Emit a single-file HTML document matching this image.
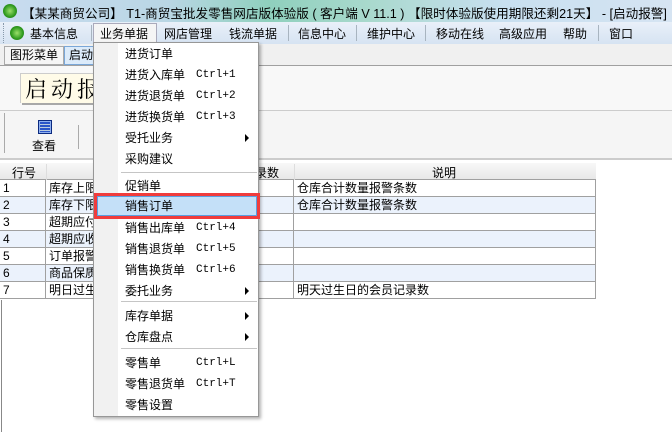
<!DOCTYPE html><html><head><meta charset="utf-8"><style>
*{margin:0;padding:0;box-sizing:border-box}
body{width:672px;height:432px;overflow:hidden;background:#fff;font-family:"Liberation Sans","Noto Sans CJK SC","WenQuanYi Zen Hei",sans-serif;font-size:12px;color:#000;position:relative}
.a{position:absolute;white-space:nowrap}
#title{left:0;top:0;width:672px;height:22px;background:linear-gradient(90deg,#c9dcf0 0%,#b9d6e4 25%,#8fd0bd 40%,#a9d9cd 55%,#c8dff0 75%,#d6e4f2 100%)}
#menubar{left:0;top:22px;width:672px;height:22px;background:linear-gradient(#e9f0f9,#d6e3f2)}
.m{top:25px;font-size:12px}
.sep{top:25px;width:1px;height:16px;background:#a8b4c0}
.ico{width:14px;height:14px;border-radius:50%;background:radial-gradient(circle,#9be06a 0,#2f9a1e 60%,#1d6b10 100%)}
.row{position:absolute;left:0;width:596px;height:17px;border-bottom:1px solid #a0a0a0}
.c{position:absolute;top:0;height:17px;border-right:1px solid #a0a0a0;padding-left:3px;line-height:16px}
#menu{left:93px;top:42px;width:166px;height:375px;background:#fff;border:1px solid #979797;box-shadow:2px 2px 3px rgba(0,0,0,.3)}
#gut{left:0;top:0;width:24px;height:373px;background:#f1f1f1}
.mi{left:31px;font-size:12px;height:18px;line-height:18px}
.sc{left:102px;font-family:"Liberation Mono",monospace;font-size:11px;height:18px;line-height:18px}
.ar{left:151px;width:0;height:0;border-left:4px solid #000;border-top:4px solid transparent;border-bottom:4px solid transparent}
.ms{left:27px;width:136px;height:1px;background:#c5c5c5}
</style></head><body>
<div class="a" id="title"></div>
<div class="a ico" style="left:3px;top:4px"></div>
<div class="a" style="left:22px;top:3px;font-size:12.6px;color:#000">【某某商贸公司】 T1-商贸宝批发零售网店版体验版 ( 客户端 V 11.1 ) 【限时体验版使用期限还剩21天】 - [启动报警]</div>
<div class="a" id="menubar"></div>
<div class="a" style="left:3px;top:23px;width:3px;height:20px;border-left:1px dotted #8899aa"></div>
<div class="a ico" style="left:10px;top:26px"></div>
<div class="a m" style="left:30px">基本信息</div>
<div class="a sep" style="left:91px"></div>
<div class="a" style="left:93px;top:23px;width:64px;height:20px;background:#f5f5f5;border:1px solid #aab;border-bottom:none"></div>
<div class="a m" style="left:100px">业务单据</div>
<div class="a m" style="left:164px">网店管理</div>
<div class="a m" style="left:229px">钱流单据</div>
<div class="a sep" style="left:288px"></div>
<div class="a m" style="left:298px">信息中心</div>
<div class="a sep" style="left:356px"></div>
<div class="a m" style="left:367px">维护中心</div>
<div class="a sep" style="left:425px"></div>
<div class="a m" style="left:436px">移动在线</div>
<div class="a m" style="left:499px">高级应用</div>
<div class="a m" style="left:563px">帮助</div>
<div class="a sep" style="left:598px"></div>
<div class="a m" style="left:609px">窗口</div>
<div class="a" style="left:0;top:44px;width:672px;height:22px;background:#f0f0f0;border-bottom:1px solid #a0a0a0"></div>
<div class="a" style="left:4px;top:46px;width:60px;height:19px;border:1px solid #aaa;background:#f5f5f5;padding-left:5px;line-height:17px">图形菜单</div>
<div class="a" style="left:64px;top:46px;width:40px;height:19px;border:1px solid #7aa7d8;background:#dcebfa;padding-left:4px;line-height:17px">启动</div>
<div class="a" style="left:0;top:66px;width:672px;height:44px;background:#f8f8f8"></div>
<div class="a" style="left:20px;top:73px;width:80px;height:30px;background:#fffbe8;border-top:1px solid #ccc;border-left:1px solid #ccc;box-shadow:2px 2px 0 #a8a8a8;font-family:'Noto Serif CJK SC',serif;font-size:22px;line-height:30px;padding-left:4px;letter-spacing:4px">启动报</div>
<div class="a" style="left:0;top:110px;width:672px;height:50px;background:#f5f5f5;border-top:1px solid #ccc;border-bottom:2px solid #ccc"></div>
<div class="a" style="left:4px;top:113px;width:3px;height:40px;border-left:1px solid #aaa"></div>
<div class="a" style="left:38px;top:120px;width:14px;height:14px;background:#2a55c8;border:1px solid #0b2a80;box-shadow:inset 0 0 0 1px #8fb0f0"></div>
<div class="a" style="left:40px;top:124px;width:10px;height:1px;background:#bcd"></div>
<div class="a" style="left:40px;top:127px;width:10px;height:1px;background:#bcd"></div>
<div class="a" style="left:40px;top:130px;width:10px;height:1px;background:#bcd"></div>
<div class="a" style="left:32px;top:137px;font-size:12px">查看</div>
<div class="a" style="left:78px;top:125px;width:1px;height:24px;background:#aaa"></div>
<div class="a" style="left:0;top:163px;width:596px;height:17px;background:linear-gradient(#f8f8f8,#e8e8e8);border-bottom:1px solid #a0a0a0"></div>
<div class="a" style="left:12px;top:164px">行号</div>
<div class="a" style="left:46px;top:164px;width:1px;height:16px;background:#ddd"></div>
<div class="a" style="left:255px;top:164px">录数</div>
<div class="a" style="left:294px;top:164px;width:1px;height:16px;background:#ddd"></div>
<div class="a" style="left:432px;top:164px">说明</div>
<div class="row" style="top:180px;background:#fff"><div class="c" style="left:0;width:46px">1</div><div class="c" style="left:46px;width:248px">库存上限</div><div class="c" style="left:294px;width:302px">仓库合计数量报警条数</div></div>
<div class="row" style="top:197px;background:#ebf2fc"><div class="c" style="left:0;width:46px">2</div><div class="c" style="left:46px;width:248px">库存下限</div><div class="c" style="left:294px;width:302px">仓库合计数量报警条数</div></div>
<div class="row" style="top:214px;background:#fff"><div class="c" style="left:0;width:46px">3</div><div class="c" style="left:46px;width:248px">超期应付</div><div class="c" style="left:294px;width:302px"></div></div>
<div class="row" style="top:231px;background:#ebf2fc"><div class="c" style="left:0;width:46px">4</div><div class="c" style="left:46px;width:248px">超期应收</div><div class="c" style="left:294px;width:302px"></div></div>
<div class="row" style="top:248px;background:#fff"><div class="c" style="left:0;width:46px">5</div><div class="c" style="left:46px;width:248px">订单报警</div><div class="c" style="left:294px;width:302px"></div></div>
<div class="row" style="top:265px;background:#ebf2fc"><div class="c" style="left:0;width:46px">6</div><div class="c" style="left:46px;width:248px">商品保质</div><div class="c" style="left:294px;width:302px"></div></div>
<div class="row" style="top:282px;background:#fff"><div class="c" style="left:0;width:46px">7</div><div class="c" style="left:46px;width:248px">明日过生</div><div class="c" style="left:294px;width:302px">明天过生日的会员记录数</div></div>
<div class="a" style="left:1px;top:300px;width:1px;height:132px;background:#888"></div>
<div class="a" id="menu">
<div class="a" id="gut"></div>
<div class="a mi" style="top:2px">进货订单</div>
<div class="a mi" style="top:23px">进货入库单</div><div class="a sc" style="top:23px">Ctrl+1</div>
<div class="a mi" style="top:44px">进货退货单</div><div class="a sc" style="top:44px">Ctrl+2</div>
<div class="a mi" style="top:65px">进货换货单</div><div class="a sc" style="top:65px">Ctrl+3</div>
<div class="a mi" style="top:86px">受托业务</div><div class="a ar" style="top:91px"></div>
<div class="a mi" style="top:107px">采购建议</div>
<div class="a ms" style="top:129px"></div>
<div class="a mi" style="top:134px">促销单</div>
<div class="a" style="left:0;top:150px;width:166px;height:26px;border:3px solid #f03c3c"></div>
<div class="a" style="left:3px;top:153px;width:160px;height:20px;background:#c4e0f8;border:1px solid #5a9ee0"></div>
<div class="a mi" style="top:154px">销售订单</div>
<div class="a mi" style="top:176px">销售出库单</div><div class="a sc" style="top:176px">Ctrl+4</div>
<div class="a mi" style="top:197px">销售退货单</div><div class="a sc" style="top:197px">Ctrl+5</div>
<div class="a mi" style="top:218px">销售换货单</div><div class="a sc" style="top:218px">Ctrl+6</div>
<div class="a mi" style="top:239px">委托业务</div><div class="a ar" style="top:244px"></div>
<div class="a ms" style="top:258px"></div>
<div class="a mi" style="top:264px">库存单据</div><div class="a ar" style="top:269px"></div>
<div class="a mi" style="top:285px">仓库盘点</div><div class="a ar" style="top:290px"></div>
<div class="a ms" style="top:305px"></div>
<div class="a mi" style="top:311px">零售单</div><div class="a sc" style="top:311px">Ctrl+L</div>
<div class="a mi" style="top:332px">零售退货单</div><div class="a sc" style="top:332px">Ctrl+T</div>
<div class="a mi" style="top:353px">零售设置</div>
</div>
</body></html>
